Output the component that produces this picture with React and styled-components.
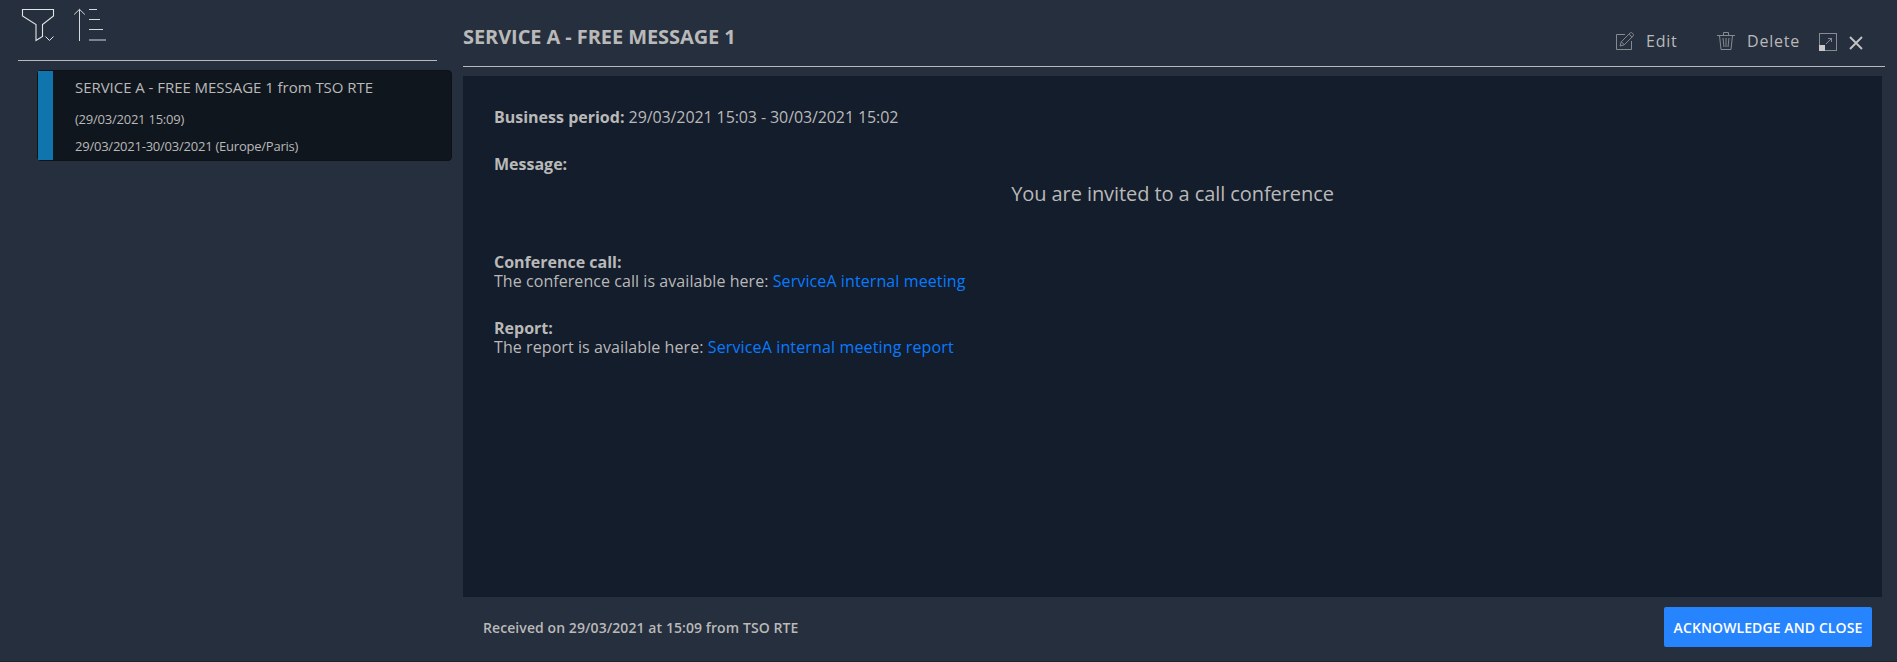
import React from "react";
import styled, { createGlobalStyle } from "styled-components";

const GlobalStyle = createGlobalStyle`
  * { box-sizing: border-box; }
  body {
    margin: 0;
    background: #262f3d;
    color: #b9b9b9;
    font-family: "Open Sans", "Noto Sans", sans-serif;
    font-size: 16px;
  }
`;

const Page = styled.div`
  display: flex;
  height: 662px;
  border-bottom: 1px solid #1d2430;
  overflow: hidden;
`;

const Sidebar = styled.aside`
  width: 463px;
  flex: none;
`;

const Toolbar = styled.div`
  display: flex;
  align-items: flex-start;
  gap: 19px;
  height: 61px;
  margin-left: 18px;
  width: 419px;
  padding: 8px 0 0 3px;
  border-bottom: 1px solid #b9b9b9;
`;

const Card = styled.article`
  display: flex;
  width: 415px;
  height: 91px;
  margin: 9px 0 0 37px;
  background: #10161e;
  border: 1px solid #0d1219;
  border-radius: 4px;
`;

const Severity = styled.div`
  width: 15px;
  background: #1074ad;
`;

const CardBody = styled.div`
  padding: 6px 0 0 22px;
  font-size: 13px;
  line-height: 20px;
`;

const CardTitle = styled.div`
  font-size: 15px;
  letter-spacing: -0.04px;
  margin-bottom: 12px;
`;

const CardLine = styled.div`
  margin-bottom: 7px;
  letter-spacing: -0.23px;
`;

const Main = styled.main`
  flex: 1;
  display: flex;
  flex-direction: column;
`;

const Header = styled.header`
  display: flex;
  justify-content: space-between;
  height: 67px;
  margin-right: 12px;
  border-bottom: 1px solid #b9b9b9;
`;

const Title = styled.h1`
  margin: 23px 0 0;
  font-size: 20px;
  line-height: 28px;
  font-weight: 700;
  letter-spacing: -0.08px;
`;

const Actions = styled.div`
  display: flex;
  align-items: flex-start;
  padding: 31px 22px 0 0;
`;

const Action = styled.div`
  display: flex;
  align-items: flex-start;
  width: ${(p) => p.$width}px;
`;

const ActionLabel = styled.span`
  margin-left: 11px;
  line-height: 20px;
  letter-spacing: 0.8px;
`;

const Panel = styled.section`
  height: 521px;
  margin: 9px 15px 0 0;
  padding: 32px 31px 0;
  background: #141d2b;
  line-height: 19px;
`;

const Block = styled.div`
  margin-bottom: ${(p) => p.$gap || 0}px;
`;

const Text = styled.span`
  letter-spacing: ${(p) => p.$tracking}px;
`;

const Message = styled.div`
  margin: 8px 0 47px;
  font-size: 20px;
  line-height: 24px;
  letter-spacing: -0.08px;
  text-align: center;
`;

const Link = styled.a`
  color: #077bff;
  text-decoration: none;
  letter-spacing: ${(p) => p.$tracking}px;
`;

const Footer = styled.footer`
  display: flex;
  justify-content: space-between;
  align-items: center;
  height: 40px;
  margin: 10px 25px 0 20px;
  font-size: 14px;
  font-weight: 600;
  letter-spacing: 0.08px;
`;

const Button = styled.button`
  width: 208px;
  height: 40px;
  padding: 0;
  border: 0;
  border-radius: 2px;
  background: #2784ff;
  color: #fff;
  font: inherit;
  letter-spacing: 0.1px;
  white-space: nowrap;
`;

const Icon = styled.svg`
  flex: none;
  display: block;
  fill: none;
  stroke: ${(p) => p.$color || "#858b93"};
  stroke-width: 1;
  margin: ${(p) => p.$margin || 0};
`;

const FilterIcon = () => (
  <Icon width="34" height="34" $color="#e2e5e8">
    <path d="M1.5 1.5H32.5V8L21.5 16.5V28.5L15 32.5V16.5L1.5 8Z" strokeWidth="1.1" />
    <path d="M24.5 28.5L28.5 32.5L32.5 28.5" />
  </Icon>
);

const SortIcon = () => (
  <Icon width="34" height="34" $color="#d6d9dd">
    <path d="M5.5 33V1.5M0.2 6.5L5.5 1.3L10.8 6.5" />
    <path d="M15 1.5H23M15 11.5H26M15 21.5H29M15 32H32" strokeWidth="1.2" />
  </Icon>
);

const EditIcon = () => (
  <Icon width="19" height="19" $margin="1px 0 0">
    <path d="M9 2.5H.5V17.5H15.5V9" />
    <path d="M4 14L5.3 9.8L14.3.8Q15.5.2 16.7 1.4T17.3 3.8L8.3 12.8ZM5.3 9.8L8.3 12.8M13 2.2L16 5.2" />
  </Icon>
);

const TrashIcon = () => (
  <Icon width="18" height="19" $margin="1px 1px 0 0">
    <path d="M0 3.5H18M6.5 3.5V.5H11.5V3.5M2.5 3.5L4 17.5H14L15.5 3.5M6 6L7 15M9 6V15M12 6L11 15" />
  </Icon>
);

const ExpandIcon = () => (
  <Icon width="18" height="18" $margin="2px 0 0">
    <rect x=".5" y=".5" width="17" height="17" />
    <path d="M7 11L13 5M9 5.5H12.5V9" />
    <rect x="0" y="12" width="6" height="6" fill="#c8c8c8" stroke="none" />
  </Icon>
);

const CloseIcon = () => (
  <Icon width="14" height="14" $color="#c3c3c3" $margin="5px 0 0 12px">
    <path d="M1 1L13 13M13 1L1 13" strokeWidth="1.9" />
  </Icon>
);

export default function App() {
  return (
    <>
      <GlobalStyle />
      <Page>
        <Sidebar>
          <Toolbar>
            <FilterIcon />
            <SortIcon />
          </Toolbar>
          <Card>
            <Severity />
            <CardBody>
              <CardTitle>SERVICE A - FREE MESSAGE 1 from TSO RTE</CardTitle>
              <CardLine>(29/03/2021 15:09)</CardLine>
              <CardLine>29/03/2021-30/03/2021 (Europe/Paris)</CardLine>
            </CardBody>
          </Card>
        </Sidebar>
        <Main>
          <Header>
            <Title>SERVICE A - FREE MESSAGE 1</Title>
            <Actions>
              <Action $width={101}>
                <EditIcon />
                <ActionLabel>Edit</ActionLabel>
              </Action>
              <Action $width={102}>
                <TrashIcon />
                <ActionLabel>Delete</ActionLabel>
              </Action>
              <ExpandIcon />
              <CloseIcon />
            </Actions>
          </Header>
          <Panel>
            <Block $gap={28}>
              <b>Business period:</b> <Text $tracking={-0.1}>29/03/2021 15:03 - 30/03/2021 15:02</Text>
            </Block>
            <Block>
              <b>Message:</b>
            </Block>
            <Message>You are invited to a call conference</Message>
            <Block>
              <b>Conference call:</b>
            </Block>
            <Block $gap={28}>
              <Text $tracking={0.06}>The conference call is available here: </Text>
              <Link href="#" $tracking={0.1}>ServiceA internal meeting</Link>
            </Block>
            <Block>
              <b>Report:</b>
            </Block>
            <Block>
              <Text $tracking={0.08}>The report is available here: </Text>
              <Link href="#" $tracking={0.14}>ServiceA internal meeting report</Link>
            </Block>
          </Panel>
          <Footer>
            <span>Received on 29/03/2021 at 15:09 from TSO RTE</span>
            <Button>ACKNOWLEDGE AND CLOSE</Button>
          </Footer>
        </Main>
      </Page>
    </>
  );
}
